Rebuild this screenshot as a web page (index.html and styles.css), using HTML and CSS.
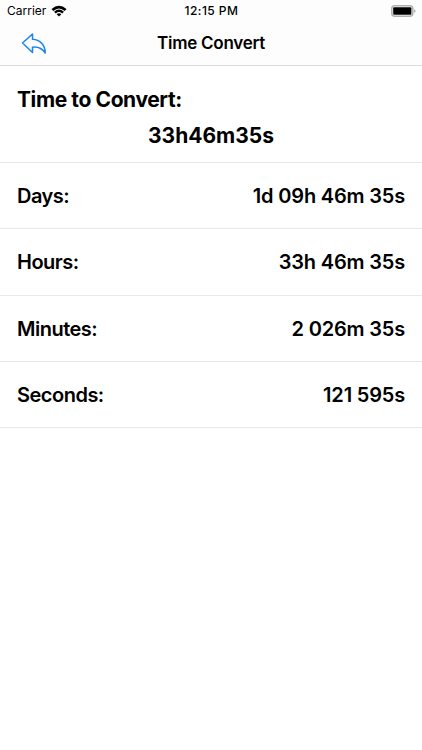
FILE: index.html
```html
<!DOCTYPE html>
<html>
<head>
    <meta charset="utf-8">
    <title>Time Convert</title>
    <link rel="stylesheet" href="styles.css">
</head>
<body>

    <div class="statusbar">
        <div class="carrier">
            <span>Carrier</span>
            <svg class="wifi" viewBox="0 0 16 12" width="16" height="12">
                <path d="M0.5 4.1 Q8 -2.8 15.5 4.1 L13.7 5.9 Q8 0.9 2.3 5.9 Z"/>
                <path d="M3.1 6.7 Q8 2.3 12.9 6.7 L11.2 8.4 Q8 5.7 4.8 8.4 Z"/>
                <path d="M5.6 9.2 Q8 7.2 10.4 9.2 L8 11.6 Z"/>
            </svg>
        </div>
        <div class="clock">12:15 PM</div>
        <div class="power">
            <svg class="battery" viewBox="0 0 25 12" width="25" height="12">
                <rect class="shell" x="0.8" y="0.8" width="21" height="10.4" rx="3"/>
                <rect x="2.2" y="2.3" width="18.2" height="7.4" rx="1"/>
                <path class="cap" d="M23.2 4.2 Q24.6 4.8 24.6 6 Q24.6 7.2 23.2 7.8 Z"/>
            </svg>
        </div>
    </div>

    <div class="navbar">
        <svg class="back" viewBox="0 0 26 22" width="26" height="22">
            <path d="M11.5 1 L1.5 10 L11.5 19.5 V14.2 C17 13.6 21 15 24.2 20 C24.3 12 19 6.6 11.5 6.2 Z"/>
        </svg>
        <h1>Time Convert</h1>
    </div>

    <!-- Value being converted -->
    <div class="source">
        <div class="label">Time to Convert:</div>
        <div class="input">33h46m35s</div>
    </div>

    <!-- Results -->
    <div class="row"><span class="name">Days:</span><span class="value">1d 09h 46m 35s</span></div>
    <div class="row"><span class="name">Hours:</span><span class="value">33h 46m 35s</span></div>
    <div class="row"><span class="name">Minutes:</span><span class="value">2 026m 35s</span></div>
    <div class="row"><span class="name">Seconds:</span><span class="value">121 595s</span></div>

</body>
</html>
```
FILE: styles.css
```css
body {
    margin: 0;
    font-family: Inter, "Liberation Sans", sans-serif;
    background: #fff;
    color: #000;
}
.statusbar {
    display: grid;
    grid-template-columns: 1fr auto 1fr;
    align-items: center;
    box-sizing: border-box;
    height: 22px;
    padding: 0 6px 1px 7px;
    background: #fdfdfd;
    font-size: 12px;
}
.carrier {
    display: flex;
    align-items: center;
    gap: 5px;
}
.clock {
    font-weight: 500;
    letter-spacing: 0.45px;
}
.power {
    display: flex;
    justify-content: flex-end;
}
.battery .shell {
    fill: none;
    stroke: #b0b0b0;
    stroke-width: 1.5;
}
.battery .cap {
    fill: #a6a6a6;
}
.navbar {
    display: grid;
    grid-template-columns: 1fr auto 1fr;
    align-items: center;
    box-sizing: border-box;
    height: 44px;
    padding: 0 21px;
    background: #fdfdfd;
    border-bottom: 1px solid #dcdcdc;
}
.back path {
    fill: none;
    stroke: #1a84ea;
    stroke-width: 1.5;
    stroke-linejoin: round;
}
h1 {
    margin: 0 0 2px;
    font-size: 17px;
    font-weight: 600;
    letter-spacing: -0.25px;
}
.source {
    box-sizing: border-box;
    height: 97px;
    padding: 16px 17px 0;
    border-bottom: 1px solid #e8e8e8;
    font-size: 21px;
    font-weight: 700;
    line-height: 36px;
}
.source .label {
    letter-spacing: -0.4px;
}
.source .input {
    text-align: center;
}
.row {
    display: flex;
    justify-content: space-between;
    align-items: center;
    box-sizing: border-box;
    height: 66.25px;
    padding: 1px 17px 0;
    border-bottom: 1px solid #e8e8e8;
    font-size: 20px;
    font-weight: 600;
}
.row .name {
    letter-spacing: -0.5px;
}
.row .value {
    letter-spacing: -0.18px;
}
```
